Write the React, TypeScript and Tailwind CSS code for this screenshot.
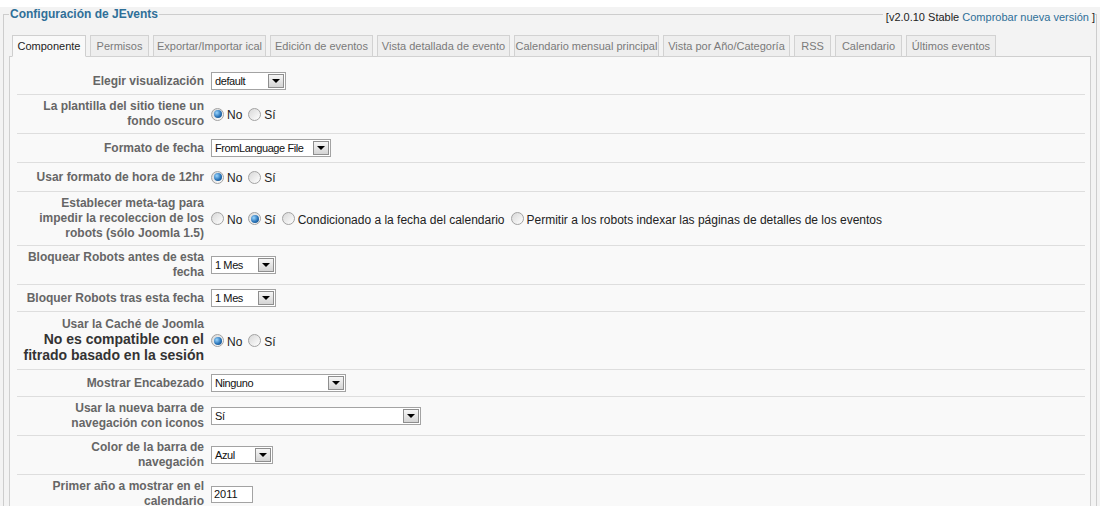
// App.tsx - JEvents configuration (Componente tab)

import React from 'react';

type Tab = { name: string; width: string };

const TABS: Tab[] = [
  { name: 'Componente', width: 'w-[74px]' },
  { name: 'Permisos', width: 'w-[59px]' },
  { name: 'Exportar/Importar ical', width: 'w-[113px]' },
  { name: 'Edición de eventos', width: 'w-[103px]' },
  { name: 'Vista detallada de evento', width: 'w-[133px]' },
  { name: 'Calendario mensual principal', width: 'w-[145px]' },
  { name: 'Vista por Año/Categoría', width: 'w-[127px]' },
  { name: 'RSS', width: 'w-[37px]' },
  { name: 'Calendario', width: 'w-[67px]' },
  { name: 'Últimos eventos', width: 'w-[90px]' },
];

/**
 * Old-style windows select box with the grey arrow button
 */
const Select: React.FC<{ value: string; width: string }> = ({ value, width }) => (
  <div className={`flex h-[18px] items-center border border-[#a3a3a3] bg-white ${width}`}>
    <span className="flex-1 truncate pl-[3px] text-[11px] tracking-[-0.4px] text-[#111]">{value}</span>
    <span className="mr-[1px] flex h-[14px] w-[16px] items-center justify-center border border-[#8e8e8e] bg-gradient-to-b from-[#f6f6f6] to-[#d4d4d4]">
      <span className="h-0 w-0 border-x-[4px] border-t-[4px] border-x-transparent border-t-black" />
    </span>
  </div>
);

const Radio: React.FC<{ label: string; checked?: boolean }> = ({ label, checked }) => (
  <label className="mr-[6px] flex h-[20px] items-center">
    <span className="flex h-[13px] w-[13px] items-center justify-center rounded-full border border-[#a2a2a2] bg-gradient-to-br from-[#d8d8d8] to-white">
      {checked && (
        <span className="h-[8px] w-[8px] rounded-full bg-[radial-gradient(circle_at_35%_35%,#9ad6ff,#2a74b8_55%,#0d3f70)]" />
      )}
    </span>
    <span className="ml-[3px] pt-[2px] text-[12px] text-[#222]">{label}</span>
  </label>
);

const Radios: React.FC<{ options: string[]; selected: number }> = ({ options, selected }) => (
  <div className="flex items-center">
    {options.map((opt, i) => (
      <Radio key={opt} label={opt} checked={i === selected} />
    ))}
  </div>
);

type Row = { lines: React.ReactNode[]; control: React.ReactNode; pad?: string };

const ROWS: Row[] = [
  { lines: ['Elegir visualización'], control: <Select value="default" width="w-[75px]" /> },
  { lines: ['La plantilla del sitio tiene un', 'fondo oscuro'], control: <Radios options={['No', 'Sí']} selected={0} /> },
  { lines: ['Formato de fecha'], control: <Select value="FromLanguage File" width="w-[120px]" />, pad: 'py-[5px]' },
  { lines: ['Usar formato de hora de 12hr'], control: <Radios options={['No', 'Sí']} selected={0} /> },
  {
    lines: ['Establecer meta-tag para', 'impedir la recoleccion de los', 'robots (sólo Joomla 1.5)'],
    control: (
      <Radios
        options={[
          'No',
          'Sí',
          'Condicionado a la fecha del calendario',
          'Permitir a los robots indexar las páginas de detalles de los eventos',
        ]}
        selected={1}
      />
    ),
  },
  { lines: ['Bloquear Robots antes de esta', 'fecha'], control: <Select value="1 Mes" width="w-[65px]" /> },
  { lines: ['Bloquer Robots tras esta fecha'], control: <Select value="1 Mes" width="w-[65px]" /> },
  {
    lines: [
      'Usar la Caché de Joomla',
      <strong key="a" className="text-[14px] text-[#333]">No es compatible con el</strong>,
      <strong key="b" className="text-[14px] text-[#333]">fitrado basado en la sesión</strong>,
    ],
    control: <Radios options={['No', 'Sí']} selected={0} />,
    pad: 'py-[5px]',
  },
  { lines: ['Mostrar Encabezado'], control: <Select value="Ninguno" width="w-[135px]" /> },
  { lines: ['Usar la nueva barra de', 'navegación con iconos'], control: <Select value="Sí" width="w-[210px]" /> },
  { lines: ['Color de la barra de', 'navegación'], control: <Select value="Azul" width="w-[62px]" /> },
  {
    lines: ['Primer año a mostrar en el', 'calendario'],
    control: (
      <input
        readOnly
        value="2011"
        className="h-[17px] w-[42px] border border-[#a3a3a3] bg-white pl-[2px] text-[11px] text-[#111] outline-none"
      />
    ),
  },
];

const App: React.FC = () => {
  return (
    <div className="min-h-screen bg-[#f3f3f3] font-['Liberation_Sans',Arial,sans-serif]">
      <fieldset className="relative mx-[3px] mt-[7px] border border-[#cdcdcd] px-[5px]">
        <legend className="px-[1px] text-[12px] font-bold leading-[15px] text-[#2f6f98]">
          Configuración de JEvents
        </legend>

        {/* version info sits on the fieldset border */}
        <div className="absolute right-[1px] top-[-13px] bg-[#f3f3f3] pl-[3px] text-[11px] text-[#222]">
          [v2.0.10 Stable <span className="text-[#2f6f98]">Comprobar nueva versión</span> ]
        </div>

        {/* tabs */}
        <div className="relative z-10 -mb-px ml-[3px] mt-[13px] flex gap-[4px]">
          {TABS.map((tab, i) => (
            <div
              key={tab.name}
              className={`flex h-[22px] items-center justify-center border text-[11px] ${tab.width} ${
                i === 0
                  ? 'border-[#cfcfcf] border-b-[#f9f9f9] bg-[#f9f9f9] text-[#222]'
                  : 'border-[#d2d2d2] bg-[#eeeeee] text-[#7a7a7a]'
              }`}
            >
              {tab.name}
            </div>
          ))}
        </div>

        {/* tab panel */}
        <div className="border border-[#cfcfcf] bg-[#f9f9f9] pb-[20px] pl-[7px] pr-[5px] pt-[11px]">
          {ROWS.map((row, i) => (
            <div key={i} className={`flex items-center border-b border-[#dedede] ${row.pad ?? 'py-[4px]'}`}>
              <div className="w-[194px] shrink-0 whitespace-nowrap pr-[7px] text-right text-[12px] font-bold leading-[15px] text-[#666]">
                {row.lines.map((line, j) => (
                  <div key={j}>{line}</div>
                ))}
              </div>
              <div className="flex items-center">{row.control}</div>
            </div>
          ))}
        </div>
      </fieldset>
    </div>
  );
};

export default App;
